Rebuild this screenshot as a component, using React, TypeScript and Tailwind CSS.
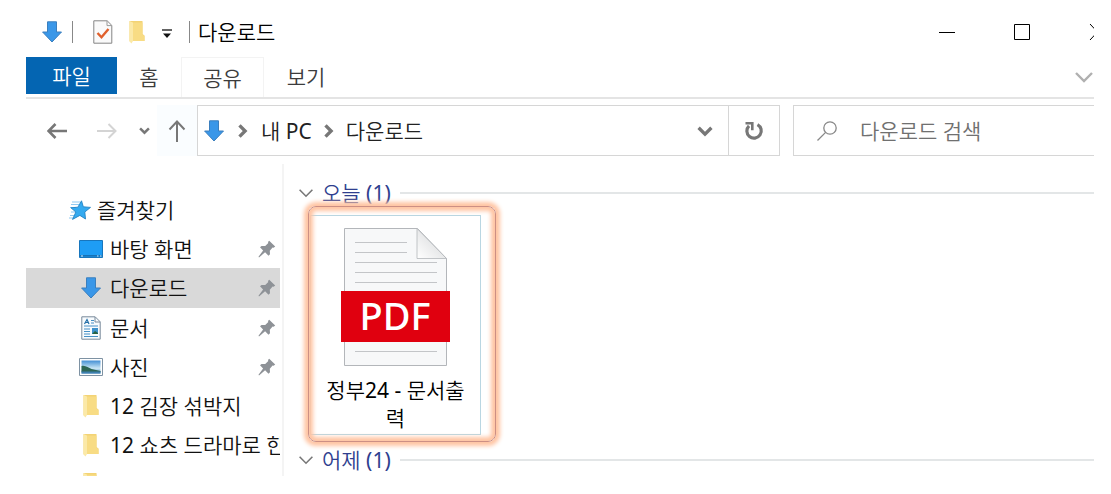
import type { ReactNode } from "react";

function DownloadArrow({ className = "" }: { className?: string }) {
  return (
    <svg viewBox="0 0 20 22" className={`h-[22px] w-5 shrink-0 ${className}`} aria-hidden="true">
      <path d="M5.5 .8h9V11h5L10 21 .6 11h4.9z" fill="#3a97e8" stroke="#3b7fbe" strokeWidth="1" strokeLinejoin="round" />
    </svg>
  );
}

function FolderIcon() {
  return (
    <svg viewBox="0 0 16 24" className="h-6 w-4 shrink-0" aria-hidden="true">
      <path d="M.5 1h13v13l2 1.5V21H.5z" fill="#f3d375" />
      <path d="M4 2.5h9.5v12l2 1.5V21H4z" fill="#f8dc84" />
      <path d="M.5 1 4 2.5V21l-1.5 2.5-2-2z" fill="#fbe9a8" />
    </svg>
  );
}

function PropertiesIcon() {
  return (
    <svg viewBox="0 0 20 24" className="h-6 w-5" fill="none" aria-hidden="true">
      <path d="M.8.8h13.4l4.6 4.6v17.8H.8z" fill="#fafafa" stroke="#858585" />
      <path d="M14 1v4.6h4.6" stroke="#9a9a9a" />
      <path d="m4.5 13 4 4.3 7-8.3" stroke="#e0602c" strokeWidth="2.4" />
    </svg>
  );
}

function StarIcon() {
  return (
    <svg viewBox="0 0 22 20" className="h-5 w-[22px] shrink-0" aria-hidden="true">
      <path d="M3 2h8M2 4.5h8M1 7.5h6M2 12h5M1 15.5h5M0 18h5" stroke="#8fcaf2" strokeWidth="1.1" />
      <path d="m12.5.8 1.8 6 7.2.6-5.7 4.6.7 7-5.6-3.6-7.4 4 3.4-7.4-5-4.2 7-.6z" fill="#34aaf0" stroke="#2483c4" strokeWidth=".9" />
    </svg>
  );
}

function DesktopIcon() {
  return (
    <svg viewBox="0 0 24 18" className="h-[18px] w-6 shrink-0" aria-hidden="true">
      <path d="M.5.5h23v17H.5z" fill="#1e9df5" stroke="#1876bd" />
      <path d="M1 15.8h22" stroke="#1671b5" strokeWidth="1.6" />
      <path d="M2 16h2M18 16h1.5M21 16h1.5" stroke="#d5efff" strokeWidth="1.2" />
    </svg>
  );
}

function DocumentIcon() {
  return (
    <svg viewBox="0 0 20 24" className="h-6 w-5 shrink-0" fill="none" aria-hidden="true">
      <path d="M.8.8h13.4l5 5v17.4H.8z" fill="#f7fbfe" stroke="#78899a" />
      <path d="M14 1v5h5" stroke="#78899a" />
      <path d="m3.5 8 2.5-4.5L8 8M4.5 6.5H7" stroke="#246fa8" strokeWidth="1.2" />
      <path d="M10 4.5h3M10 7h3M3 10h14M3 13h6M3 15.5h6M3 18h6M3 20.5h14" stroke="#4690c5" strokeWidth="1.2" />
      <path d="M11 12h6v6h-6z" fill="#3d91cc" />
      <path d="m11 18 3-3 3 2v1z" fill="#286343" />
    </svg>
  );
}

function PictureIcon() {
  return (
    <svg viewBox="0 0 24 18" className="h-[18px] w-6 shrink-0" aria-hidden="true">
      <defs>
        <linearGradient id="sky" x2="0" y2="1">
          <stop stopColor="#438fd4" />
          <stop offset=".6" stopColor="#c9e6f5" />
          <stop offset="1" stopColor="#4d8ec2" />
        </linearGradient>
      </defs>
      <path d="M.5.5h23v17H.5z" fill="#fff" stroke="#7e92a3" />
      <path d="M2.5 2.5h19v13h-19z" fill="url(#sky)" />
      <path d="M2.5 8c4-1 7 2 10 3l9 2v1h-19z" fill="#2d6655" />
      <path d="M2.5 13.5h19v2h-19z" fill="#3f7fae" />
    </svg>
  );
}

function PinIcon() {
  return (
    <svg viewBox="0 0 18 18" className="h-[18px] w-[18px] shrink-0" fill="#8e9297" aria-hidden="true">
      <path d="m11.2.8 6 5.8-1.6 1.2-1-.2-2.8 3.2.2 3.4-1.5 1.5-3.4-3.4L1 17.4l-.5-.6 4.6-6.3L2 7.2l1.5-1.3 3.7.2 3.1-3-.3-1.2z" />
    </svg>
  );
}

function Chevron({ className, d, width = 2 }: { className: string; d: string; width?: number }) {
  return (
    <svg viewBox="0 0 20 20" className={`shrink-0 ${className}`} fill="none" stroke="currentColor" strokeWidth={width} aria-hidden="true">
      <path d={d} />
    </svg>
  );
}

const DOWN = "m2 6 8 8 8-8";
const RIGHT = "m5 2 8 8-8 8";

function PdfIcon() {
  return (
    <svg viewBox="0 0 110 140" className="h-[140px] w-[110px]" aria-hidden="true">
      <defs>
        <linearGradient id="fold" x1="0" y1="1" x2="1" y2="0">
          <stop stopColor="#fff" />
          <stop offset="1" stopColor="#cfd1d3" />
        </linearGradient>
      </defs>
      <path d="M3.5 1.5h73l29 30v107H3.5z" fill="#f7f8f9" stroke="#b3b6ba" />
      <path d="M76 1.5v30h29.5z" fill="url(#fold)" stroke="#b3b6ba" strokeWidth=".8" />
      <path d="M14 15.5h52M14 25.5h52M14 35.5h82M14 45.5h82M14 55.5h82M14 124.5h82" stroke="#c3c5c8" />
      <path d="M0 64h109v51H0z" fill="#e0000f" />
      <text x="54" y="103" textAnchor="middle" fill="#fff" fontFamily="'Noto Sans', sans-serif" fontSize="38" fontWeight="500">
        PDF
      </text>
    </svg>
  );
}

interface Place {
  name: string;
  icon: ReactNode;
  pinned?: boolean;
  active?: boolean;
}

const places: Place[] = [
  { name: "바탕 화면", icon: <DesktopIcon />, pinned: true },
  { name: "다운로드", icon: <DownloadArrow />, pinned: true, active: true },
  { name: "문서", icon: <DocumentIcon />, pinned: true },
  { name: "사진", icon: <PictureIcon />, pinned: true },
  { name: "12 김장 섞박지", icon: <FolderIcon /> },
  { name: "12 쇼츠 드라마로 한", icon: <FolderIcon /> },
  { name: "", icon: <FolderIcon /> },
];

function TitleBar() {
  return (
    <header className="flex h-[57px] shrink-0 items-center pt-[7px] pl-4">
      <DownloadArrow />
      <span className="ml-[10px] h-[22px] w-px bg-[#888]" />
      <button aria-label="속성" className="ml-5">
        <PropertiesIcon />
      </button>
      <button aria-label="새 폴더" className="ml-4">
        <FolderIcon />
      </button>
      <button aria-label="빠른 실행 도구 모음 사용자 지정" className="ml-[17px] pt-1">
        <svg viewBox="0 0 10 10" className="h-[10px] w-[10px]" aria-hidden="true">
          <path d="M0 1h10" stroke="#222" strokeWidth="1.4" />
          <path d="M1 4.5h8L5 9z" fill="#111" />
        </svg>
      </button>
      <span className="ml-[17px] h-[22px] w-px bg-[#888]" />
      <h1 className="ml-2 text-black">다운로드</h1>
      <div className="-mr-[40px] ml-auto flex text-black">
        <button aria-label="최소화" className="flex w-[75px] justify-center">
          <svg viewBox="0 0 16 16" className="h-4 w-4" stroke="currentColor" aria-hidden="true">
            <path d="M0 8.5h16" />
          </svg>
        </button>
        <button aria-label="최대화" className="flex w-[75px] justify-center">
          <svg viewBox="0 0 16 16" className="h-4 w-4" fill="none" stroke="currentColor" aria-hidden="true">
            <path d="M.5.5h15v15H.5z" />
          </svg>
        </button>
        <button aria-label="닫기" className="flex w-[75px] justify-center">
          <svg viewBox="0 0 16 16" className="h-4 w-4" stroke="currentColor" aria-hidden="true">
            <path d="m1 0 15 16M16 0 1 16" />
          </svg>
        </button>
      </div>
    </header>
  );
}

function Ribbon() {
  return (
    <div className="flex h-[42px] shrink-0 items-stretch border-b-2 border-[#e4e4e4] text-[#3c3c3c]">
      <button className="mb-[3px] w-[91px] bg-[#0465b2] text-white">파일</button>
      <button className="w-16">홈</button>
      <button className="w-[83px] border border-b-0 border-[#f3f3f3]">공유</button>
      <button className="w-[84px]">보기</button>
      <button aria-label="리본 확장" className="ml-auto text-[#b0b0b0]">
        <Chevron className="h-5 w-5" d={DOWN} width={2.4} />
      </button>
    </div>
  );
}

function AddressRow() {
  return (
    <div className="mt-[6px] flex h-[51px] shrink-0 items-stretch text-[#777]">
      <div className="flex pl-[6px]">
        <button aria-label="뒤로" className="flex w-[50px] items-center justify-center">
          <svg viewBox="0 0 20 16" className="h-4 w-5" fill="none" stroke="currentColor" strokeWidth="2.6" aria-hidden="true">
            <path d="M20 8H2M8.5 1l-7 7 7 7" />
          </svg>
        </button>
        <button aria-label="앞으로" className="flex w-[50px] items-center justify-center text-[#d4d4d4]">
          <svg viewBox="0 0 20 16" className="h-4 w-5" fill="none" stroke="currentColor" strokeWidth="2" aria-hidden="true">
            <path d="M0 8h18M11.5 1l7 7-7 7" />
          </svg>
        </button>
        <button aria-label="최근 위치" className="flex w-[25px] items-center justify-center">
          <Chevron className="h-[11px] w-[11px]" d={DOWN} width={4.5} />
        </button>
        <button aria-label="위로" className="flex w-10 items-center justify-center bg-[#fafdff]">
          <svg viewBox="0 0 18 22" className="h-[22px] w-[18px]" fill="none" stroke="currentColor" strokeWidth="2" aria-hidden="true">
            <path d="M9 22V2M1.5 9.5 9 1.5l7.5 8" />
          </svg>
        </button>
      </div>
      <div className="flex min-w-0 flex-1 border border-[#d6d6d6]">
        <nav aria-label="주소" className="flex flex-1 items-center pl-[6px] text-[#222]">
          <DownloadArrow />
          <Chevron className="ml-3 h-[14px] w-[14px] text-[#777]" d={RIGHT} width={4.8} />
          <a href="#pc" className="ml-[11px]">
            내 PC
          </a>
          <Chevron className="ml-[10px] h-[14px] w-[14px] text-[#777]" d={RIGHT} width={4.8} />
          <a href="#downloads" className="ml-[10px]">
            다운로드
          </a>
          <button aria-label="이전 위치" className="mr-[15px] ml-auto text-[#777]">
            <Chevron className="h-4 w-4" d={DOWN} width={4.2} />
          </button>
        </nav>
        <button aria-label="새로 고침" className="flex w-[51px] items-center justify-center border-l border-[#d6d6d6]">
          <svg viewBox="0 0 20 20" className="h-5 w-5" fill="none" stroke="currentColor" strokeWidth="3.2" aria-hidden="true">
            <path d="M13.5 3.6a7.2 7.2 0 1 1-8.5 1.2" />
            <path d="M1.5 2.2h6.8v7" strokeWidth="2.6" />
          </svg>
        </button>
      </div>
      <label className="ml-[13px] flex w-[301px] items-center border border-r-0 border-[#d6d6d6] pl-[23px]">
        <svg viewBox="0 0 20 20" className="h-5 w-5 shrink-0" fill="none" stroke="#888" strokeWidth="1.3" aria-hidden="true">
          <circle cx="13" cy="7" r="6.2" />
          <path d="M8.6 11.4.5 19.5" />
        </svg>
        <input type="search" aria-label="다운로드 검색" placeholder="다운로드 검색" className="ml-[23px] w-full min-w-0 outline-none placeholder:text-[#707070]" />
      </label>
    </div>
  );
}

function Sidebar() {
  return (
    <nav aria-label="탐색 창" className="mt-2 w-[258px] shrink-0 overflow-hidden border-r-2 border-[#f4f4f4] pt-[26px] pr-[2px]">
      <a href="#favorites" className="flex h-[39px] items-center gap-[6px] pl-[43px]">
        <StarIcon />
        즐겨찾기
      </a>
      <ul>
        {places.map((place, i) => (
          <li key={i}>
            <a
              href={`#place-${i}`}
              aria-label={place.name || "폴더"}
              className={`flex items-center overflow-hidden pr-1 pl-[53px] whitespace-nowrap ${place.active ? "h-10 bg-[#d9d9d9]" : "h-[39px]"}`}
            >
              <span className="mr-[7px] flex w-6 shrink-0 justify-center">{place.icon}</span>
              {place.name}
              {place.pinned && (
                <span className="ml-auto">
                  <PinIcon />
                </span>
              )}
            </a>
          </li>
        ))}
      </ul>
    </nav>
  );
}

function GroupHeader({ label }: { label: string }) {
  return (
    <button aria-expanded="true" className="flex h-7 w-full items-center text-left text-[#2f3f8f]">
      <Chevron className="h-4 w-4 text-[#777]" d={DOWN} width={2} />
      <span className="ml-2 w-[78px] shrink-0">{label}</span>
      <span className="h-[2px] flex-1 bg-[#e3e6e7]" />
    </button>
  );
}

function FileList() {
  return (
    <main className="min-w-0 flex-1 pt-[23px] pl-[14px]">
      <GroupHeader label="오늘 (1)" />
      <div className="relative ml-3 w-[171px] pt-2 pb-[11px]">
        <button className="flex h-[220px] w-full flex-col items-center border border-[#b9d6e2] px-3 pt-[11px] text-center text-black">
          <PdfIcon />
          <span className="mt-[9px] leading-7 break-all">정부24 - 문서출력</span>
        </button>
        <div className="pointer-events-none absolute -top-px -left-[2px] h-[236px] w-[188px] rounded-lg border border-[#cc8f84] shadow-[0_0_4px_4px_#ffc4a2,inset_0_0_4px_4px_#ffc4a2]" />
      </div>
      <GroupHeader label="어제 (1)" />
    </main>
  );
}

export default function App() {
  return (
    <div className="h-screen overflow-hidden bg-white pr-[17px] pb-[18px] pl-[26px] font-['Noto_Sans','Noto_Sans_CJK_KR_DemiLight','Noto_Sans_CJK_KR',sans-serif] text-[21px] leading-7 font-normal text-[#111]">
      <div className="flex h-full flex-col overflow-hidden">
        <TitleBar />
        <Ribbon />
        <AddressRow />
        <div className="flex min-h-0 flex-1 overflow-hidden">
          <Sidebar />
          <FileList />
        </div>
      </div>
    </div>
  );
}
